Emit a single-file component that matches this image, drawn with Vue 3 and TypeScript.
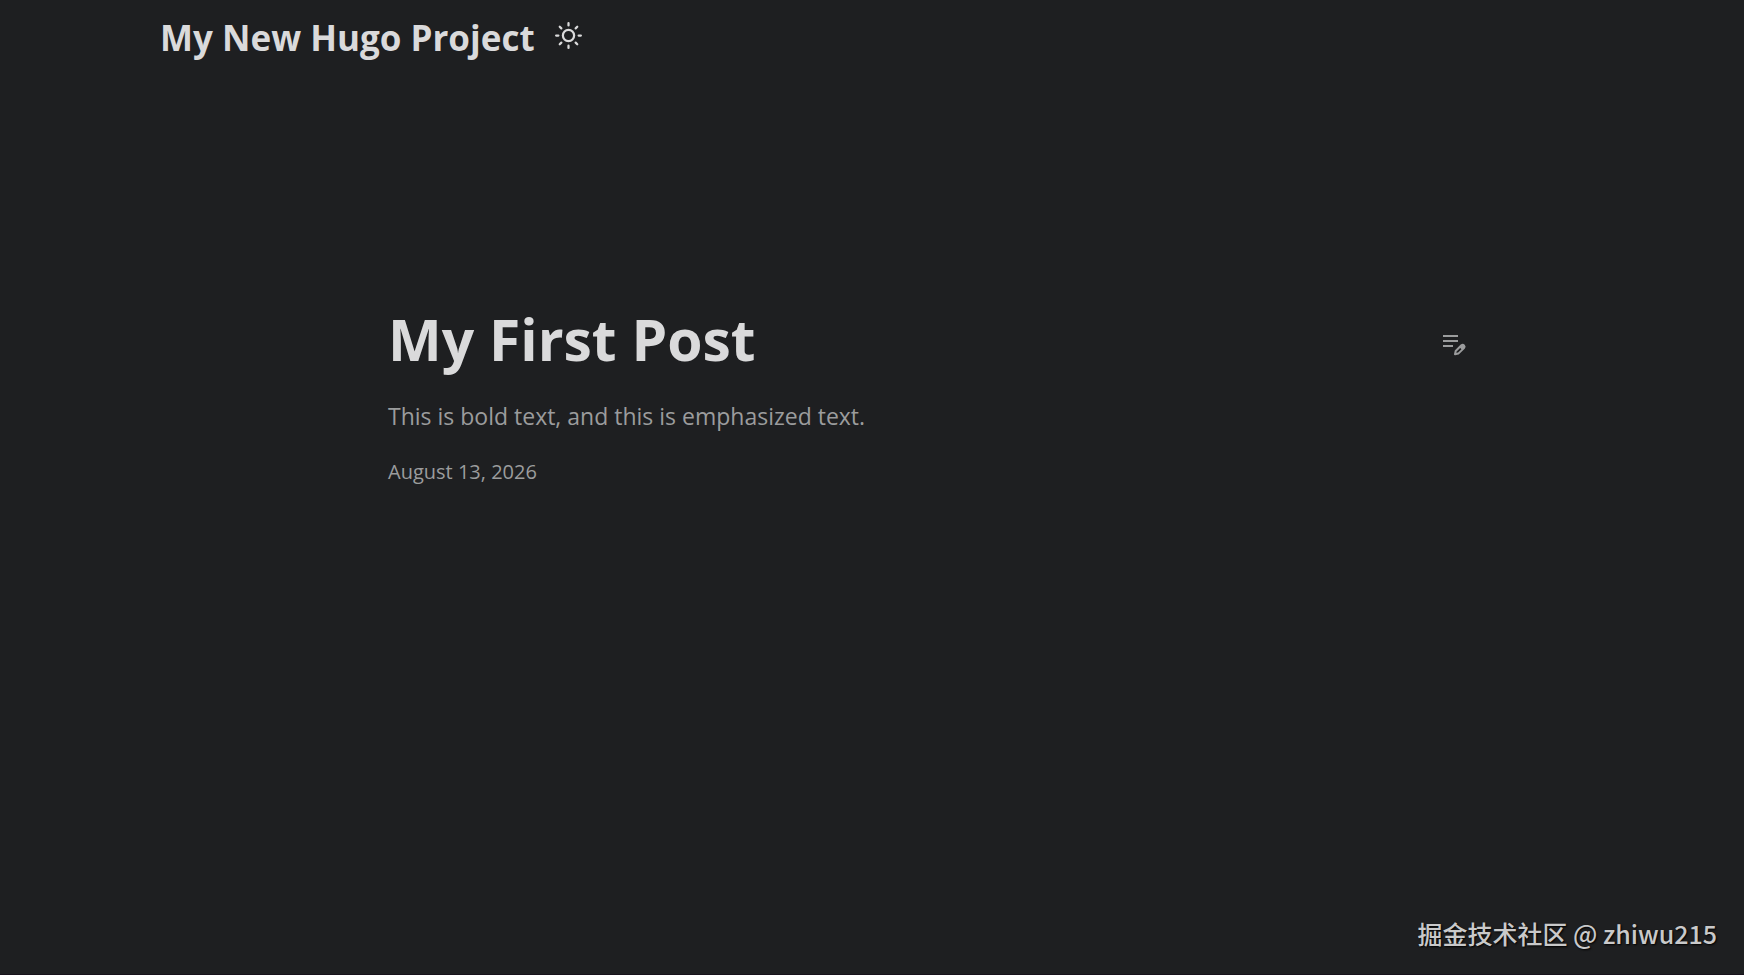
<script setup lang="ts">
import { ref } from 'vue'

interface Post {
  title: string
  description: string
  date: string
  isoDate: string
}

const siteTitle = 'My New Hugo Project'
const post: Post = {
  title: 'My First Post',
  description: 'This is bold text, and this is emphasized text.',
  date: 'August 13, 2026',
  isoDate: '2026-08-13',
}
const dark = ref<boolean>(true)
</script>

<template>
  <div class="page" :class="{ light: !dark }">
    <header class="header">
      <a class="logo" href="#">{{ siteTitle }}</a>
      <button class="theme" type="button" aria-label="Toggle theme" @click="dark = !dark">
        <svg viewBox="0 0 24 24" width="27" height="27" fill="none" stroke="currentColor" stroke-width="2" stroke-linecap="round">
          <circle cx="12" cy="12" r="5" />
          <path d="M12 1v2M12 21v2M4.22 4.22l1.42 1.42M18.36 18.36l1.42 1.42M1 12h2M21 12h2M4.22 19.78l1.42-1.42M18.36 5.64l1.42-1.42" />
        </svg>
      </button>
    </header>

    <main class="main">
      <article class="post">
        <div class="heading">
          <h1 class="title">{{ post.title }}</h1>
          <a class="edit" href="#" aria-label="Edit post">
            <svg viewBox="0 0 27 27" width="27" height="27" fill="none" stroke="currentColor" stroke-width="2">
              <path d="M2 4h15M2 9h15M2 14h10" />
              <path stroke-linejoin="round" d="M14 22.3L14.7 19L20.4 13.3Q21.8 12.3 23 13.4Q24.2 14.7 23 16.1L17.3 21.6Z" />
              <path fill="currentColor" stroke="none" d="M18.5 15.2L21.3 12.5Q23.8 13 24 15.3L21.2 18Z" />
            </svg>
          </a>
        </div>
        <p class="description">{{ post.description }}</p>
        <time class="date" :datetime="post.isoDate">{{ post.date }}</time>
      </article>
    </main>

    <footer class="credit">掘金技术社区 @ zhiwu215</footer>
  </div>
</template>

<style>
body {
  margin: 0;
}
</style>

<style scoped>
.page {
  --bg: #1e1f21;
  --primary: #dadadb;
  --secondary: #9b9c9d;
  box-sizing: border-box;
  display: flex;
  flex-direction: column;
  min-height: 100vh;
  background: var(--bg);
  border-bottom: 1px solid #17121b;
  color: var(--primary);
  font-family: "Segoe UI", "Open Sans", "Noto Sans", sans-serif;
}
.page.light {
  --bg: #f5f5f5;
  --primary: #1e1e1e;
  --secondary: #6c6c6c;
}
.header {
  display: flex;
  align-items: center;
  gap: 20px;
  height: 72px;
  padding: 0 36px 0 160px;
}
.logo {
  padding-top: 4px;
  color: inherit;
  font-size: 35px;
  font-weight: 700;
  line-height: 72px;
  text-decoration: none;
  white-space: nowrap;
}
.theme {
  display: flex;
  padding: 0 0 2px;
  border: 0;
  background: none;
  color: inherit;
  cursor: pointer;
}
.main {
  flex: 1;
  padding: 229px 276px 0 388px;
}
.heading {
  display: flex;
  align-items: center;
  justify-content: space-between;
}
.title {
  margin: 0;
  font-size: 57px;
  font-weight: 700;
  line-height: 76px;
}
.edit {
  display: flex;
  padding-top: 12px;
  color: var(--secondary);
}
.description {
  margin: 21px 0 20px;
  color: var(--secondary);
  font-size: 23px;
  line-height: 36px;
}
.date {
  display: block;
  color: var(--secondary);
  font-size: 20px;
  line-height: 36px;
}
.credit {
  padding: 0 27px 23px;
  color: #c9c9ca;
  font-family: "Noto Sans CJK SC", sans-serif;
  font-size: 25px;
  font-weight: 500;
  line-height: 36px;
  text-align: right;
  text-shadow: 1px 1px 2px #000;
}
</style>
